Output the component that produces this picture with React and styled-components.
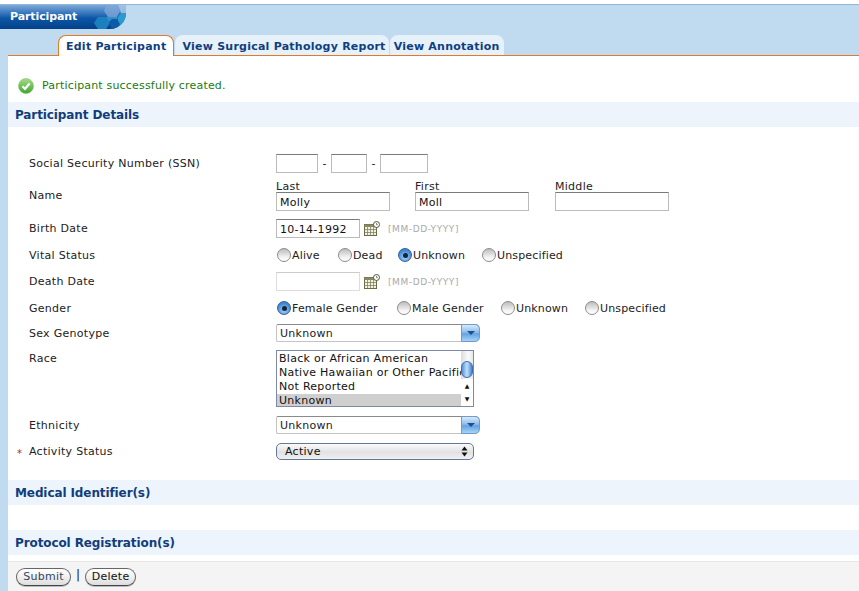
import React from "react";
import styled, { createGlobalStyle } from "styled-components";

const GlobalStyle = createGlobalStyle`
  html, body {
    margin: 0;
    padding: 0;
    background: #fff;
  }
  body {
    font-family: "DejaVu Sans", Verdana, sans-serif;
    font-size: 11px;
    letter-spacing: 0.28px;
    color: #222;
  }
`;

const Page = styled.div`
  width: 859px;
  height: 591px;
  overflow: hidden;
  display: flex;
  flex-direction: column;
  padding-top: 4px;
  box-sizing: border-box;
  background: #c0daf0;
  box-shadow: inset 0 4px 0 #fff;
`;

const TitleBar = styled.div`
  height: 25px;
  flex: none;
  border-top: 1px solid #8db8de;
  box-sizing: border-box;
  display: flex;
`;

const TitleTab = styled.div`
  width: 126px;
  height: 24px;
  position: relative;
  overflow: hidden;
  box-sizing: border-box;
  padding: 5px 0 0 10px;
  border-bottom-right-radius: 16px;
  background: linear-gradient(#7fa9d6 0%, #3f7cc0 30%, #0d56a6 55%, #03418a 100%);
  color: #fff;
  font-size: 11px;
  font-weight: bold;
  line-height: 14px;
  letter-spacing: -0.1px;
`;

const TitleLogo = styled.svg`
  position: absolute;
  right: 0;
  top: 0;
`;

const TabRow = styled.div`
  flex: none;
  height: 26px;
  padding: 6px 0 0 58px;
  box-sizing: border-box;
  display: flex;
  gap: 1px;
  position: relative;
`;

const Tab = styled.div`
  height: 20px;
  box-sizing: border-box;
  padding: 0 ${(p) => p.$padR || 5}px 0 ${(p) => p.$padL || 5}px;
  font-size: 11px;
  font-weight: bold;
  line-height: 23px;
  letter-spacing: 0.24px;
  color: #0f3f80;
  white-space: nowrap;
  border-radius: 8px 8px 0 0;
  background: ${(p) => (p.$active ? "#fff" : "#e6f1fa")};
  ${(p) =>
    p.$active &&
    `
    border: 1px solid #e07a28;
    border-bottom: none;
    height: 21px;
    position: relative;
    z-index: 1;
    line-height: 22px;
  `}
`;

const Content = styled.div`
  flex: 1;
  margin-left: 8px;
  background: #fff;
  border-top: 1px solid #e07a28;
  display: flex;
  flex-direction: column;
  min-height: 0;
`;

const Message = styled.div`
  height: 46px;
  flex: none;
  display: flex;
  align-items: center;
  gap: 8px;
  padding: 13px 0 0 10px;
  box-sizing: border-box;
  color: #1b7a12;
  font-size: 11px;
  letter-spacing: 0.18px;
`;

const SectionHeader = styled.div`
  flex: none;
  height: 25px;
  margin-top: ${(p) => p.$top || 0}px;
  padding-left: 7px;
  background: #edf4fb;
  color: #123d7c;
  font-size: 12px;
  font-weight: bold;
  line-height: 27px;
  letter-spacing: -0.1px;
`;

const Form = styled.div`
  flex: none;
  padding: 23px 0 0 21px;
  display: flex;
  flex-direction: column;
  position: relative;
`;

const Row = styled.div`
  display: flex;
  height: ${(p) => p.$h}px;
  align-items: ${(p) => (p.$top ? "flex-start" : "center")};
  position: relative;
`;

const Label = styled.div`
  width: 247px;
  flex: none;
  line-height: 14px;
  color: #222;
  padding-top: ${(p) => p.$nudge || 0}px;
`;

const Required = styled.span`
  position: absolute;
  left: -12px;
  top: 9px;
  color: #b3261e;
  font-size: 10px;
  line-height: 14px;
`;

const Controls = styled.div`
  display: flex;
  align-items: ${(p) => p.$align || "center"};
`;

const TextBox = styled.div`
  width: ${(p) => p.$w}px;
  height: 19px;
  box-sizing: border-box;
  border: 1px solid ${(p) => (p.$faint ? "#ddd" : "#bbb")};
  border-top-color: ${(p) => (p.$faint ? "#ccc" : "#7a7a7a")};
  background: #fff;
  padding-left: 3px;
  line-height: 20px;
  font-size: 11px;
  color: #111;
  flex: none;
`;

const Dash = styled.span`
  width: 13px;
  text-align: center;
  flex: none;
`;

const NameField = styled.div`
  width: ${(p) => p.$w}px;
  flex: none;
  display: flex;
  flex-direction: column;
`;

const NameCaption = styled.span`
  height: 12px;
  line-height: 14px;
`;

const CalButton = styled.svg`
  margin: 0 8px 0 4px;
  flex: none;
`;

const Hint = styled.span`
  color: #aaa;
  font-size: 9px;
  letter-spacing: 0.6px;
`;

const RadioOption = styled.div`
  display: flex;
  align-items: center;
  width: ${(p) => p.$w}px;
  flex: none;
  padding-left: 1px;
  box-sizing: border-box;
  white-space: nowrap;
  letter-spacing: 0.15px;
`;

const RadioDot = styled.span`
  width: 14px;
  height: 14px;
  margin-right: 1px;
  border-radius: 50%;
  flex: none;
  box-sizing: border-box;
  position: relative;
  border: 1px solid ${(p) => (p.$on ? "#2f5f9e" : "#8c8c8c")};
  background: ${(p) =>
    p.$on
      ? "radial-gradient(circle at 50% 70%, #a9d2f5, #3f85cf 70%)"
      : "linear-gradient(#bdbdbd, #f4f4f4 70%, #fff)"};
  ${(p) =>
    p.$on &&
    `
    &::after {
      content: "";
      position: absolute;
      left: 3.500px;
      top: 3.500px;
      width: 5px;
      height: 5px;
      border-radius: 50%;
      background: #10233f;
    }
  `}
`;

const ComboBox = styled.div`
  width: 204px;
  height: 18px;
  display: flex;
  box-sizing: border-box;
  border: 1px solid #c4c4c4;
  border-top-color: #8a8a8a;
  border-right: none;
  border-radius: 2px 5px 5px 2px;
  background: #fff;
`;

const ComboText = styled.div`
  flex: 1;
  padding-left: 3px;
  line-height: 17px;
`;

const ComboArrow = styled.div`
  width: 19px;
  margin: -1px 0;
  border: 1px solid #6b9bd0;
  border-radius: 0 5px 5px 0;
  box-sizing: border-box;
  background: linear-gradient(#d8e9f9 0%, #8fbdea 45%, #62a2e2 55%, #a9d3f7 100%);
  display: flex;
  align-items: center;
  justify-content: center;
  &::after {
    content: "";
    border-left: 4px solid transparent;
    border-right: 4px solid transparent;
    border-top: 4px solid #1c4f92;
  }
`;

const ListBox = styled.div`
  width: 198px;
  height: 57px;
  margin-top: 5px;
  box-sizing: border-box;
  border: 1px solid #7d8aa6;
  background: #fff;
  display: flex;
  overflow: hidden;
`;

const ListItems = styled.div`
  width: 184px;
  flex: none;
  padding-top: 1px;
`;

const ListItem = styled.div`
  height: 14px;
  line-height: 14px;
  padding-left: 2px;
  white-space: nowrap;
  color: #111;
  background: ${(p) => (p.$selected ? "#cfcfcf" : "transparent")};
`;

const ScrollTrack = styled.div`
  flex: 1;
  position: relative;
  background: linear-gradient(90deg, #dcdcdc, #fbfbfb 60%, #e6e6e6);
`;

const ScrollThumb = styled.div`
  position: absolute;
  left: 0;
  top: 10px;
  width: 12px;
  height: 17px;
  border-radius: 6px;
  border: 1px solid #3d6fb0;
  box-sizing: border-box;
  background: linear-gradient(90deg, #4f93e0, #c5e0f8 50%, #3f82d4);
`;

const ScrollArrow = styled.div`
  position: absolute;
  left: 0;
  width: 12px;
  text-align: center;
  font-size: 6px;
  letter-spacing: 0;
  line-height: 14px;
  height: 14px;
  color: #111;
  background: #fff;
  top: ${(p) => p.$top}px;
`;

const PopupSelect = styled.div`
  width: 198px;
  height: 17px;
  box-sizing: border-box;
  border: 1px solid #62789c;
  border-radius: 5px;
  background: linear-gradient(#fafafa, #e2e2e2 55%, #f0f0f0);
  display: flex;
  align-items: center;
  padding-left: 8px;
  justify-content: space-between;
  line-height: 15px;
  color: #111;
`;

const PopupArrows = styled.svg`
  margin-right: 5px;
`;

const Footer = styled.div`
  margin-top: 6px;
  flex: 1;
  background: #f4f4f4;
  border-top: 1px solid #e6e6e6;
  display: flex;
  align-items: center;
  padding: 0 0 0 8px;
  gap: 5px;
`;

const PillButton = styled.button`
  width: ${(p) => p.$w}px;
  height: 18px;
  padding: 0;
  border: 1px solid #666;
  border-bottom-color: #444;
  border-radius: 9px;
  background: linear-gradient(#fff, #f0f0f0 50%, #dedede);
  box-shadow: 0 1px 0 #bbb;
  font: 11px "DejaVu Sans", Verdana, sans-serif;
  letter-spacing: 0.28px;
  color: ${(p) => p.$color};
`;

const Separator = styled.span`
  color: #111;
  font-size: 12px;
  letter-spacing: 0;
  margin-top: -3px;
`;

const CalendarIcon = () => (
  <CalButton width="16" height="16" viewBox="0 0 16 16">
    <rect x="0.5" y="3.5" width="12" height="11" fill="#f2f0df" stroke="#6a6a48" />
    <rect x="0.5" y="3.5" width="12" height="2.5" fill="#8a8a62" />
    <path d="M0.5 8.5h12M0.5 11.5h12M3.5 6v8.5M6.5 6v8.5M9.5 6v8.5" stroke="#77775a" strokeWidth="0.7" />
    <circle cx="12.5" cy="3.5" r="3" fill="#fff" stroke="#55553c" />
    <path d="M12.5 1.8v1.9h1.3" fill="none" stroke="#55553c" strokeWidth="0.7" />
  </CalButton>
);

const SuccessIcon = () => (
  <svg width="16" height="16" viewBox="0 0 16 16" style={{ flex: "none" }}>
    <defs>
      <linearGradient id="okGrad" x1="0" y1="0" x2="0" y2="1">
        <stop offset="0" stopColor="#a8dc86" />
        <stop offset="1" stopColor="#3fa52c" />
      </linearGradient>
    </defs>
    <circle cx="8" cy="8" r="7.5" fill="url(#okGrad)" stroke="#7cbf66" strokeWidth="0.6" />
    <path d="M4.4 8.2 7 10.8 11.6 5.6" fill="none" stroke="#fff" strokeWidth="2.2" />
  </svg>
);

const HexLogo = () => (
  <TitleLogo width="34" height="24" viewBox="0 0 34 24">
    <path d="M14 1 19 0H25L28 6L25 12H16L12 6Z" fill="#7ea8d8" opacity="0.8" />
    <path d="M26 0H34V8H29Z" fill="#a9c6e2" opacity="0.85" />
    <path d="M26 12 29 8H34V14C33 18 31 21 28 22L25 19Z" fill="#2a9bd2" />
    <path d="M2 18 6 12H14L18 18L14 24H6Z" fill="#1c80bf" />
    <path d="M17 18 20 14H25L28 19L25 24H20Z" fill="#0f5ca6" />
    <path d="M14 12H26L25 14H20L17 17Z" fill="#3ea6d8" opacity="0.7" />
  </TitleLogo>
);

const Radio = ({ w, on, children }) => (
  <RadioOption $w={w}>
    <RadioDot $on={on} />
    {children}
  </RadioOption>
);

export default function App() {
  return (
    <Page>
      <GlobalStyle />
      <TitleBar>
        <TitleTab>
          Participant
          <HexLogo />
        </TitleTab>
      </TitleBar>
      <TabRow>
        <Tab $active $padL={7} $padR={7}>Edit Participant</Tab>
        <Tab $padL={7} $padR={3}>View Surgical Pathology Report</Tab>
        <Tab $padL={4} $padR={4}>View Annotation</Tab>
      </TabRow>
      <Content>
        <Message>
          <SuccessIcon />
          Participant successfully created.
        </Message>
        <SectionHeader>Participant Details</SectionHeader>
        <Form>
          <Row $h={26}>
            <Label $nudge={1}>Social Security Number (SSN)</Label>
            <Controls>
              <TextBox $w={42} />
              <Dash>-</Dash>
              <TextBox $w={36} />
              <Dash>-</Dash>
              <TextBox $w={48} />
            </Controls>
          </Row>
          <Row $h={39}>
            <Label>Name</Label>
            <Controls $align="flex-start">
              <NameField $w={139}>
                <NameCaption>Last</NameCaption>
                <TextBox $w={114}>Molly</TextBox>
              </NameField>
              <NameField $w={140}>
                <NameCaption>First</NameCaption>
                <TextBox $w={114}>Moll</TextBox>
              </NameField>
              <NameField $w={114}>
                <NameCaption>Middle</NameCaption>
                <TextBox $w={114} />
              </NameField>
            </Controls>
          </Row>
          <Row $h={27}>
            <Label>Birth Date</Label>
            <Controls>
              <TextBox $w={84}>10-14-1992</TextBox>
              <CalendarIcon />
              <Hint>[MM-DD-YYYY]</Hint>
            </Controls>
          </Row>
          <Row $h={26}>
            <Label $nudge={1}>Vital Status</Label>
            <Controls>
              <Radio w={61}>Alive</Radio>
              <Radio w={60}>Dead</Radio>
              <Radio w={84} on>Unknown</Radio>
              <Radio w={90}>Unspecified</Radio>
            </Controls>
          </Row>
          <Row $h={27}>
            <Label>Death Date</Label>
            <Controls>
              <TextBox $w={84} $faint />
              <CalendarIcon />
              <Hint>[MM-DD-YYYY]</Hint>
            </Controls>
          </Row>
          <Row $h={26}>
            <Label $nudge={1}>Gender</Label>
            <Controls>
              <Radio w={120} on>Female Gender</Radio>
              <Radio w={104}>Male Gender</Radio>
              <Radio w={84}>Unknown</Radio>
              <Radio w={90}>Unspecified</Radio>
            </Controls>
          </Row>
          <Row $h={24}>
            <Label $nudge={1}>Sex Genotype</Label>
            <ComboBox>
              <ComboText>Unknown</ComboText>
              <ComboArrow />
            </ComboBox>
          </Row>
          <Row $h={67} $top>
            <Label $nudge={7}>Race</Label>
            <ListBox>
              <ListItems>
                <ListItem>Black or African American</ListItem>
                <ListItem>Native Hawaiian or Other Pacific</ListItem>
                <ListItem>Not Reported</ListItem>
                <ListItem $selected>Unknown</ListItem>
              </ListItems>
              <ScrollTrack>
                <ScrollThumb />
                <ScrollArrow $top={28}>▲</ScrollArrow>
                <ScrollArrow $top={41}>▼</ScrollArrow>
              </ScrollTrack>
            </ListBox>
          </Row>
          <Row $h={26}>
            <Label $nudge={1}>Ethnicity</Label>
            <ComboBox>
              <ComboText>Unknown</ComboText>
              <ComboArrow />
            </ComboBox>
          </Row>
          <Row $h={26}>
            <Required>*</Required>
            <Label $nudge={1}>Activity Status</Label>
            <PopupSelect>
              Active
              <PopupArrows width="7" height="11" viewBox="0 0 7 11">
                <path d="M3.500 0.5 6.500 4.500H0.500ZM3.500 10.500 0.500 6.500H6.500Z" fill="#111" />
              </PopupArrows>
            </PopupSelect>
          </Row>
        </Form>
        <SectionHeader $top={16}>Medical Identifier(s)</SectionHeader>
        <SectionHeader $top={25}>Protocol Registration(s)</SectionHeader>
        <Footer>
          <PillButton $w={55} $color="#33475f">Submit</PillButton>
          <Separator>|</Separator>
          <PillButton $w={51} $color="#111">Delete</PillButton>
        </Footer>
      </Content>
    </Page>
  );
}
